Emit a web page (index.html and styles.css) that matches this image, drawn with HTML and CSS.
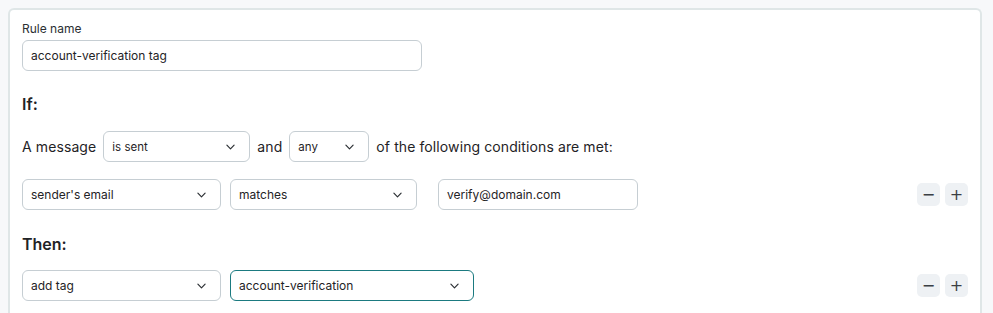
FILE: index.html
```html
<!DOCTYPE html>
<html lang="en">
<head>
  <meta charset="UTF-8">
  <meta name="viewport" content="width=device-width, initial-scale=1.0">
  <title>Rule editor</title>
  <link rel="stylesheet" href="styles.css">
</head>
<body>
  <div class="card">
    <div class="field">
      <label class="field-label" for="rule-name">Rule name</label>
      <input class="text-input rule-name" id="rule-name" type="text" value="account-verification tag">
    </div>

    <h3 class="section-title if-title">If:</h3>
    <div class="sentence">
      <span>A message</span>
      <div class="select small w-sent"><span>is sent</span><svg class="chev" viewBox="0 0 10 6"><polyline points="1,1 5,5 9,1"/></svg></div>
      <span>and</span>
      <div class="select small w-any"><span>any</span><svg class="chev" viewBox="0 0 10 6"><polyline points="1,1 5,5 9,1"/></svg></div>
      <span>of the following conditions are met:</span>
    </div>

    <div class="rule-row">
      <div class="controls">
        <div class="select w-field"><span>sender's email</span><svg class="chev" viewBox="0 0 10 6"><polyline points="1,1 5,5 9,1"/></svg></div>
        <div class="select w-op"><span>matches</span><svg class="chev" viewBox="0 0 10 6"><polyline points="1,1 5,5 9,1"/></svg></div>
        <input class="text-input w-value" type="text" value="verify@domain.com">
      </div>
      <div class="row-buttons">
        <button class="icon-btn">&minus;</button>
        <button class="icon-btn">+</button>
      </div>
    </div>

    <h3 class="section-title then-title">Then:</h3>
    <div class="rule-row">
      <div class="controls">
        <div class="select w-field"><span>add tag</span><svg class="chev" viewBox="0 0 10 6"><polyline points="1,1 5,5 9,1"/></svg></div>
        <div class="select w-tag focused"><span>account-verification</span><svg class="chev" viewBox="0 0 10 6"><polyline points="1,1 5,5 9,1"/></svg></div>
      </div>
      <div class="row-buttons">
        <button class="icon-btn">&minus;</button>
        <button class="icon-btn">+</button>
      </div>
    </div>
  </div>
</body>
</html>
```

FILE: styles.css
```css
html, body {
  height: 100%;
}
body {
  margin: 0;
  padding: 8px 11px 0 8px;
  background-color: #f7f8fa;
  font-family: 'Inter', 'Roboto', sans-serif;
  color: #1f2326;
  font-size: 12px;
  box-sizing: border-box;
  overflow: hidden;
}
.card {
  background-color: #fff;
  border: 2px solid #dfe6e7;
  border-bottom: none;
  border-radius: 6px 6px 0 0;
  padding: 11px 12px 20px;
  min-height: 100%;
  box-sizing: border-box;
}
.field {
  display: flex;
  flex-direction: column;
  gap: 3px;
}
.field-label {
  font-size: 12px;
  line-height: 16px;
  color: #2b2f33;
}
.text-input {
  height: 31px;
  box-sizing: border-box;
  border: 1px solid #c6ced3;
  border-radius: 6px;
  padding: 0 8px;
  font-family: inherit;
  font-size: 12px;
  color: #1f2326;
  background-color: #fff;
  outline: none;
}
.rule-name {
  width: 400px;
}
.section-title {
  margin: 0;
  font-size: 16px;
  line-height: 20px;
  font-weight: 600;
  color: #1f2326;
}
.if-title {
  margin-top: 23px;
}
.then-title {
  margin-top: 24px;
}
.sentence {
  display: flex;
  align-items: center;
  gap: 7px;
  margin-top: 17px;
  font-size: 14px;
}
.sentence > span {
  letter-spacing: 0.1px;
}
.rule-row {
  display: flex;
  justify-content: space-between;
  align-items: center;
  margin-top: 17px;
}
.then-title + .rule-row {
  margin-top: 16px;
}
.controls {
  display: flex;
  align-items: center;
  gap: 9px;
}
.select {
  height: 31px;
  box-sizing: border-box;
  border: 1px solid #c6ced3;
  border-radius: 6px;
  padding: 0 14px 0 8px;
  display: flex;
  align-items: center;
  justify-content: space-between;
  background-color: #fff;
  font-size: 12px;
}
.select.small {
  font-size: 11.5px;
}
.select.focused {
  border-color: #1b7a80;
}
.chev {
  width: 9px;
  height: 6px;
  fill: none;
  stroke: #2b2f33;
  stroke-width: 1.3;
  stroke-linecap: round;
  stroke-linejoin: round;
}
.w-sent { width: 147px; }
.w-any { width: 80px; }
.w-field { width: 199px; }
.w-op { width: 187px; }
.w-value { width: 200px; margin-left: 12px; }
.w-tag { width: 244px; }
.row-buttons {
  display: flex;
  gap: 5px;
}
.icon-btn {
  width: 23px;
  height: 23px;
  padding: 0;
  border: none;
  border-radius: 5px;
  background-color: #eef1f4;
  color: #3a3f44;
  font-family: 'DejaVu Sans', sans-serif;
  font-size: 16px;
  line-height: 23px;
  cursor: pointer;
}
```
